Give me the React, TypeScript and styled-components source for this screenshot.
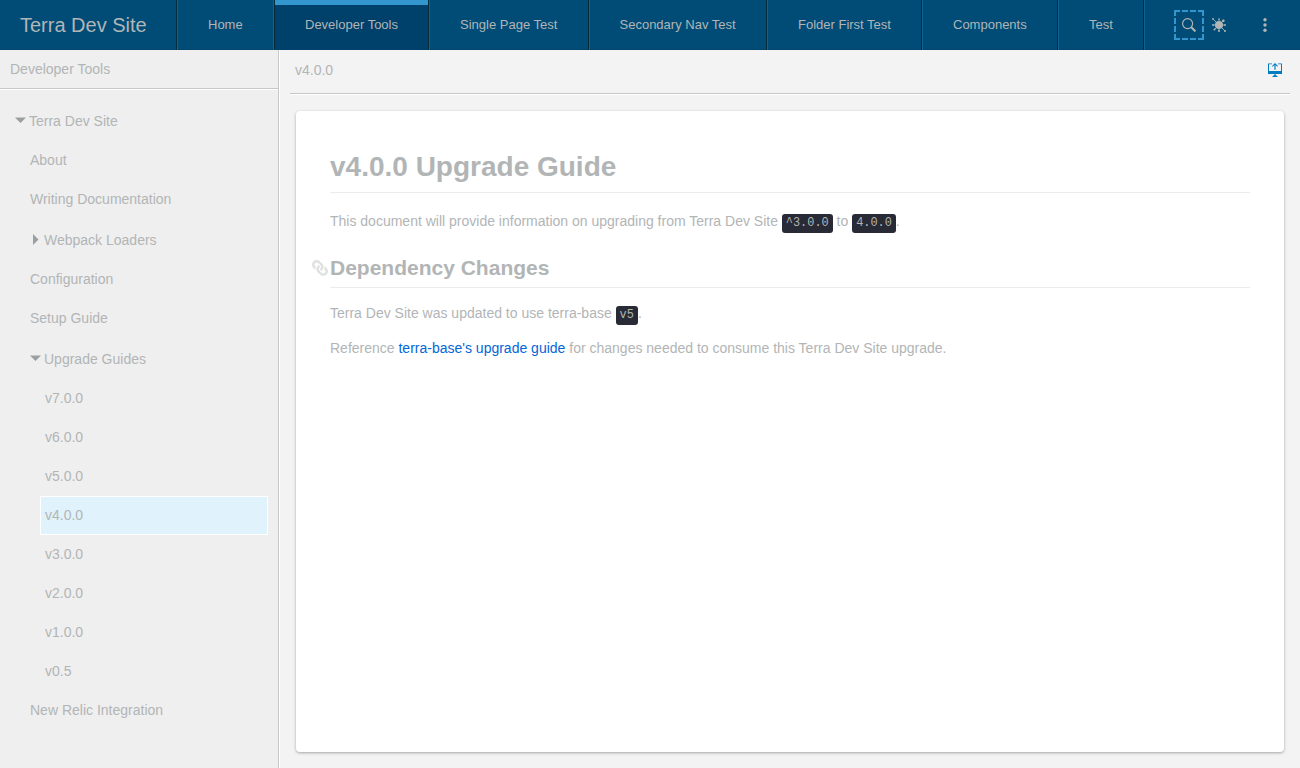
import React from 'react';
import styled, { createGlobalStyle } from 'styled-components';
import { FaLink } from 'react-icons/fa';

const GlobalStyle = createGlobalStyle`
  *, *::before, *::after { box-sizing: border-box; }
  html, body { margin: 0; padding: 0; }
  body {
    font-family: 'Liberation Sans', Arial, sans-serif;
    font-size: 14px;
    color: #b2b5b6;
    background: #f3f3f3;
    overflow: hidden;
  }
`;

const Page = styled.div`
  display: flex;
  flex-direction: column;
  height: 768px;
  width: 1300px;
`;

const Header = styled.header`
  display: flex;
  flex: none;
  height: 50px;
  background: #004c76;
  box-shadow: inset 0 -1px 0 #00456f;
`;

const Brand = styled.div`
  width: 177px;
  padding-left: 20px;
  border-right: 1px solid #032d3d;
  font-size: 20px;
  line-height: 50px;
  white-space: nowrap;
`;

const Tab = styled.a<{ $width: number; $inset?: number; $active?: boolean; $beforeActive?: boolean }>`
  flex: none;
  width: ${(p) => p.$width}px;
  border-left: 1px solid ${(p) => (p.$active ? '#032d3d' : '#0f6390')};
  border-right: 1px solid ${(p) => (p.$beforeActive ? '#0f6390' : '#032d3d')};
  padding-left: ${(p) => p.$inset ?? 30}px;
  font-size: 13px;
  line-height: 49px;
  white-space: nowrap;
  background: ${(p) => (p.$active ? 'linear-gradient(#3496cf 5px, #00416b 5px) padding-box' : 'transparent')};
`;

const Utilities = styled.div`
  display: flex;
  flex: 1;
  align-items: center;
  border-left: 1px solid #0f6390;
  padding-left: 29px;
`;

const IconButton = styled.button<{ $focused?: boolean; $gap?: number }>`
  display: flex;
  align-items: center;
  justify-content: center;
  width: 30px;
  height: 30px;
  margin: 0 0 0 ${(p) => p.$gap ?? 0}px;
  padding: 0;
  border: 0;
  background: none;
  color: #b2b5b6;
  outline: ${(p) => (p.$focused ? '2px dashed #3496cf' : 'none')};
  outline-offset: -2px;
  svg { display: block; }
`;

const Body = styled.div`
  display: flex;
  flex: 1;
  min-height: 0;
`;

const Sidebar = styled.aside`
  flex: none;
  width: 279px;
  background: #efefef;
  border-right: 1px solid #c5c7c8;
`;

const SidebarTitle = styled.div`
  height: 39px;
  padding-left: 10px;
  line-height: 39px;
  border-bottom: 1px solid #c5c7c8;
  box-shadow: 0 1px 0 #fff;
`;

const Tree = styled.nav`
  display: flex;
  flex-direction: column;
  padding: 11px 10px 0 0;
`;

const TreeItem = styled.a<{ $level: number; $folder?: boolean; $selected?: boolean }>`
  display: flex;
  align-items: center;
  height: ${(p) => (p.$folder ? 41 : 39)}px;
  margin-left: ${(p) => p.$level * 15 + 10}px;
  padding: ${(p) => (p.$folder ? '0 0 0 4px' : '0 0 2px 4px')};
  border: 1px solid ${(p) => (p.$selected ? '#fff' : 'transparent')};
  background: ${(p) => (p.$selected ? '#e0f2fb' : 'transparent')};
  white-space: nowrap;
`;

const Caret = styled.svg`
  flex: none;
  width: 11px;
  height: 11px;
  margin: 0 3px 0 0;
  fill: #9b9fa1;
`;

const Main = styled.main`
  display: flex;
  flex: 1;
  flex-direction: column;
  border-left: 1px solid #fff;
  padding: 0 10px;
`;

const Toolbar = styled.div`
  display: flex;
  justify-content: space-between;
  align-items: flex-start;
  height: 44px;
  padding: 12px 8px 0 5px;
  line-height: 16px;
  border-bottom: 1px solid #c5c7c8;
  box-shadow: 0 1px 0 #fff;
  svg { margin-top: 1px; }
`;

const Card = styled.article`
  margin: 17px 6px 16px;
  flex: 1;
  padding: 34px;
  background: #fff;
  border-radius: 4px;
  box-shadow: 0 1px 3px rgba(0, 0, 0, 0.32);
`;

const Title = styled.h1`
  margin: 0;
  height: 48px;
  padding-top: 6px;
  font-size: 28px;
  line-height: 32px;
  border-bottom: 1px solid #eaecef;
`;

const Subtitle = styled.h2`
  display: flex;
  height: 36px;
  margin: 20px 0 0 -18px;
  font-size: 21px;
  line-height: 32px;
`;

const SubtitleText = styled.span`
  flex: 1;
  border-bottom: 1px solid #eaecef;
`;

const AnchorIcon = styled(FaLink)`
  width: 16px;
  height: 16px;
  margin: 8px 2px 0 0;
  color: #e0e1e1;
  transform: scaleX(-1);
`;

const Paragraph = styled.p<{ $top: number }>`
  margin: ${(p) => p.$top}px 0 0;
  height: 21px;
  line-height: 21px;
`;

const Code = styled.code`
  display: inline-block;
  height: 19px;
  padding: 0 4px;
  border-radius: 3px;
  background: #282a36;
  color: #b2b5b1;
  font-family: 'Liberation Mono', monospace;
  font-size: 11.9px;
  line-height: 18px;
  vertical-align: baseline;
`;

const Link = styled.a`
  color: #0366d6;
`;

const tabs = [
  { label: 'Home', width: 97, beforeActive: true },
  { label: 'Developer Tools', width: 155, active: true },
  { label: 'Single Page Test', width: 160 },
  { label: 'Secondary Nav Test', width: 178, inset: 29.5 },
  { label: 'Folder First Test', width: 155 },
  { label: 'Components', width: 136 },
  { label: 'Test', width: 86 },
];

type Node = { label: string; level: number; folder?: 'open' | 'closed'; selected?: boolean };

const nodes: Node[] = [
  { label: 'Terra Dev Site', level: 0, folder: 'open' },
  { label: 'About', level: 1 },
  { label: 'Writing Documentation', level: 1 },
  { label: 'Webpack Loaders', level: 1, folder: 'closed' },
  { label: 'Configuration', level: 1 },
  { label: 'Setup Guide', level: 1 },
  { label: 'Upgrade Guides', level: 1, folder: 'open' },
  { label: 'v7.0.0', level: 2 },
  { label: 'v6.0.0', level: 2 },
  { label: 'v5.0.0', level: 2 },
  { label: 'v4.0.0', level: 2, selected: true },
  { label: 'v3.0.0', level: 2 },
  { label: 'v2.0.0', level: 2 },
  { label: 'v1.0.0', level: 2 },
  { label: 'v0.5', level: 2 },
  { label: 'New Relic Integration', level: 1 },
];

const SearchIcon = () => (
  <svg width="14" height="14" viewBox="0 0 14 14" fill="none" stroke="currentColor">
    <circle cx="5.6" cy="5.6" r="5" strokeWidth="1.15" />
    <path d="M9.3 9.3 13.4 13.4" strokeWidth="2" />
  </svg>
);

const BugIcon = () => (
  <svg width="14" height="14" viewBox="0 0 14 14" fill="currentColor" stroke="currentColor">
    <circle cx="7" cy="7" r="4" stroke="none" />
    <path d="M7 1v12M1 7h12M1 1l12 12M11.5 2.5 2.5 11.5" strokeWidth=".9" />
    <g stroke="none">
      <circle cx="1" cy="1" r=".9" />
      <circle cx="11.3" cy="2.7" r="1.3" />
      <circle cx="2.5" cy="11.5" r="1" />
      <circle cx="13" cy="13" r="1" />
      <circle cx="7" cy="13" r="1" />
      <circle cx="1" cy="7" r=".9" />
      <circle cx="13" cy="7" r=".9" />
      <circle cx="7" cy="1" r=".8" />
    </g>
  </svg>
);

const MoreIcon = () => (
  <svg width="14" height="14" viewBox="0 0 14 14" fill="currentColor">
    <circle cx="7" cy="1.7" r="1.7" />
    <circle cx="7" cy="7" r="1.7" />
    <circle cx="7" cy="12.3" r="1.7" />
  </svg>
);

const MonitorIcon = () => (
  <svg width="14" height="14" viewBox="0 0 14 14" fill="#007cc3">
    <path d="M0 .4h4v.8H1V8h12V1.2h-3V.4h4v10.5H0z" />
    <path d="M7 0l3 2.9-.8.8-1.6-1.6v4.6H6.4V2.1L4.8 3.7 4 2.9z" />
    <path d="M6 11.5h2v.8l1.5 1v.7h-5v-.7l1.5-1z" />
  </svg>
);

export default function App() {
  return (
    <>
      <GlobalStyle />
      <Page>
        <Header>
          <Brand>Terra Dev Site</Brand>
          {tabs.map((t) => (
            <Tab key={t.label} $width={t.width} $inset={t.inset} $active={t.active} $beforeActive={t.beforeActive}>
              {t.label}
            </Tab>
          ))}
          <Utilities>
            <IconButton $focused aria-label="Search"><SearchIcon /></IconButton>
            <IconButton aria-label="Debug"><BugIcon /></IconButton>
            <IconButton $gap={16} aria-label="More"><MoreIcon /></IconButton>
          </Utilities>
        </Header>
        <Body>
          <Sidebar>
            <SidebarTitle>Developer Tools</SidebarTitle>
            <Tree>
              {nodes.map((n) => (
                <TreeItem key={n.label} $level={n.level} $folder={!!n.folder} $selected={n.selected}>
                  {n.folder && (
                    <Caret viewBox="0 0 11 11">
                      <path d={n.folder === 'open' ? 'M0 2.5h11L5.5 8z' : 'M3 0v11l5.5-5.5z'} />
                    </Caret>
                  )}
                  {n.label}
                </TreeItem>
              ))}
            </Tree>
          </Sidebar>
          <Main>
            <Toolbar>
              <span>v4.0.0</span>
              <MonitorIcon />
            </Toolbar>
            <Card>
              <Title>v4.0.0 Upgrade Guide</Title>
              <Paragraph $top={18}>
                This document will provide information on upgrading from Terra Dev Site <Code>^3.0.0</Code> to <Code>4.0.0</Code>.
              </Paragraph>
              <Subtitle>
                <AnchorIcon />
                <SubtitleText>Dependency Changes</SubtitleText>
              </Subtitle>
              <Paragraph $top={15}>
                Terra Dev Site was updated to use terra-base <Code>v5</Code>.
              </Paragraph>
              <Paragraph $top={14}>
                Reference <Link>terra-base's upgrade guide</Link> for changes needed to consume this Terra Dev Site upgrade.
              </Paragraph>
            </Card>
          </Main>
        </Body>
      </Page>
    </>
  );
}
